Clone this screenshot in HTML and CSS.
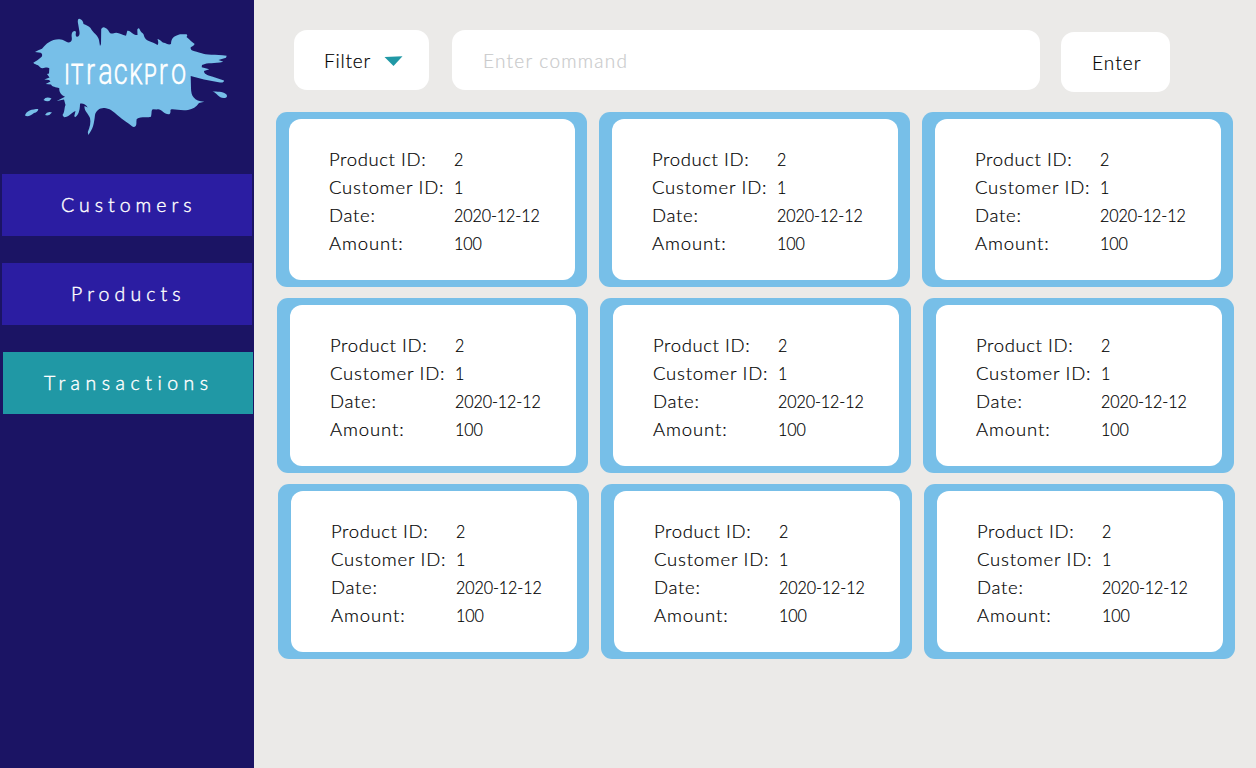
FILE: index.html
```
<!DOCTYPE html>
<html lang="en">
<head>
<meta charset="utf-8">
<title>ITrackPro</title>
<link rel="stylesheet" href="styles.css">
</head>
<body>
<div class="app">
<aside class="sidebar">
<svg class="logo" viewBox="0 0 254 150" role="img" aria-label="ITrackPro">
<g class="splash">
<path d="M33.3 62.7Q37 61 41.7 56.7Q43 54 40.7 52.7L35 52Q38 50 42 48.7C46 44 51 39.3 59 39.3C65 39.3 65 43 70 42.3C74 40 70 36 72.5 32Q75 30 76 32Q75 37 77.3 36.7Q80 36 79.5 32L77.8 22Q77.7 18 80 19Q83 20 83.5 24C86 25 89 26 90.5 28C93 33 98 35 99 40L100 46L101 44L101.2 29Q103 26 105.5 28C110 30 108 34 113 33.5C118 31 121 35 126 35.7L127.3 30.7C131 30 132 35 137.5 35L137.3 29.5Q139 27 140 30C141 33 144 33 144 36C146 42 152 41 157.5 45Q159 43 157.5 39C160 39 162 43 165 43C167 44 169 45 171 44C171 38 174 36 180 34.3L186.7 34.3Q188 36 186.5 37C190 40 192 42 194.7 44Q194 46 190.7 47.3C190 51 194 51 201.7 53.3C205 55 216 54.5 226.7 55.7L226 57.7L218.5 60L223.3 61.7C214 64 208 62 202 65L201.7 67.3L209.3 69.3L204 71C204 74 207 75 212 76.5L224 80.5Q224 83 220 82.5L204 79.5L190.7 76L191 88C191 96 194 101 204.3 101.8L199 103C196 107 193 109 188 110C181 111 176 109 171.7 109.3C169 110 172 112 169.3 114.3C164 115 161 108 157 109.5L152.7 109.3C151 111 152 113 151 116.7C147 118 141 116 136.7 119C136 122 137 124 135.7 126Q134 128 132 126.3C127 122 124 121 120 117.3C115 113 111 109 106 108.3C101 107 96 110 95 115C94 124 93 129 88.3 135L87.8 132C90 127 91 122 90 118C88 113 84 111 84.5 106L87.7 107.5C86 104 82 103 80 103.8C80 111 78 116 75 117.3L74.3 116L75.5 111C71 113 69 117 64 117.3L62.5 115C65 112 64 108 65.5 105L64 99.5L56.7 101L65 96.7C61 95 59 92 59.3 88.3C56 87 52 87 51 84.5L45.7 84L50.5 81.5L49 80L44.3 79.5L49.5 77.5L47 74L49 73.5L49.3 68.3C46 66 43 70 40 67.3C38 64 35 65 33.3 62.7Z"/>
<path d="M25 115.5C26 111 32 109 38.3 109Q38 112 34 113C31 116 27 117 25 115.5Z"/>
<path d="M43.5 100Q46 96 51.5 98.5Q49 103 43.5 100Z"/>
<path d="M45 115Q47 111 52 112.5Q49 116.5 45 115Z"/>
<path d="M212.5 91.3C217 92 222 91 226.5 94.5Q228 97 225 98C219 99 217 93 212.5 91.3Z"/>
</g>
<text class="wordmark" transform="translate(0 84.2) scale(.72 1)" x="89.2 98.6 119.6 136.4 158 180 200 220.4 237.6">IT<tspan class="tall">rac</tspan>KP<tspan class="tall">ro</tspan></text>
</svg>
<nav class="nav">
<a class="nav-item customers">Customers</a>
<a class="nav-item products">Products</a>
<a class="nav-item transactions active">Transactions</a>
</nav>
</aside>
<main class="main">
<div class="toolbar">
<button class="control filter"><span>Filter</span><svg class="caret" viewBox="0 0 19 11"><path d="M.5 1L18.5.3L9.5 10Z"/></svg></button>
<div class="control command">Enter command</div>
<button class="control enter">Enter</button>
</div>
<section class="cards" id="cards"></section>
</main>
</div>
<script src="cards.js"></script>
</body>
</html>
```
FILE: styles.css
```
* { box-sizing: border-box; }
body { margin: 0; background: #ebeae8; color: #000; font: 300 18.5px/28px Lato, sans-serif; -webkit-text-stroke: .2px currentColor; }
.app { display: flex; width: 1256px; height: 768px; overflow: hidden; }
.sidebar { width: 254px; flex: none; background: #1b1464; }
.logo { display: block; width: 254px; height: 150px; }
.splash { fill: #77bfe8; }
.wordmark { fill: #fff; -webkit-text-stroke: 0; stroke: #fff; stroke-width: .9; font-family: Roboto, sans-serif; font-weight: 300; font-size: 28.5px; }
.tall { font-size: 37.5px; stroke-width: .5; }
.nav { display: flex; flex-direction: column; gap: 27px; padding: 24px 0 0 2px; }
.nav-item { width: 250px; height: 62px; background: #2b1da2; color: #fff; font-weight: 300; font-size: 19.5px; line-height: 62px; white-space: nowrap; -webkit-text-stroke-width: .4px; }
.nav-item.active { background: #2098a5; margin-left: 1px; }
.customers { padding-left: 59px; letter-spacing: 5px; }
.products { padding-left: 69px; letter-spacing: 5.1px; }
.transactions { padding-left: 41px; letter-spacing: 5.5px; }
.main { flex: 1; padding: 30px 0 0 22px; }
.toolbar { display: flex; height: 62px; padding-left: 18px; }
.control { display: flex; align-items: center; height: 60px; padding: 2px 0 0 30px; border: 0; border-radius: 13px; background: #fff; color: #000; font: inherit; font-size: 19px; letter-spacing: .8px; white-space: nowrap; }
.filter { width: 135px; }
.filter span { width: 60px; text-align: left; }
.caret { width: 19px; height: 11px; fill: #2098a5; }
.command { width: 588px; margin-left: 23px; padding-left: 31px; color: #c9cacb; letter-spacing: 1.25px; }
.enter { width: 109px; margin: 2px 0 0 21px; padding-left: 31px; letter-spacing: 1.1px; }
.cards { padding-top: 20px; display: flex; flex-direction: column; gap: 11px; }
.row { display: flex; gap: 12px; }
.row:nth-child(2) { padding-left: 1px; }
.row:nth-child(3) { padding-left: 2px; }
.card { flex: none; width: 311px; height: 175px; padding: 7px 12px 7px 13px; border-radius: 11px; background: #77bfe8; }
.details { display: grid; grid-template-columns: 124.5px 1fr; grid-auto-rows: 28px; margin: 0; height: 161px; padding: 26px 0 0 40px; border-radius: 12px; background: #fff; white-space: nowrap; }
.details dd { margin: 0; }
.product-id { letter-spacing: .6px; }
.customer-id { letter-spacing: .77px; }
.date { letter-spacing: .7px; }
.amount { letter-spacing: .9px; }
.value { transform: scaleX(.87); transform-origin: left; letter-spacing: -.1px; }
```
FILE: cards.js
```
const fields = [
  ["Product ID:", "2", "product-id"],
  ["Customer ID:", "1", "customer-id"],
  ["Date:", "2020-12-12", "date"],
  ["Amount:", "100", "amount"]
];
const card = `<article class="card"><dl class="details">${fields
  .map(([label, value, name]) => `<dt class="${name}">${label}</dt><dd class="value">${value}</dd>`)
  .join("")}</dl></article>`;
document.getElementById("cards").innerHTML = `<div class="row">${card.repeat(3)}</div>`.repeat(3);
```
